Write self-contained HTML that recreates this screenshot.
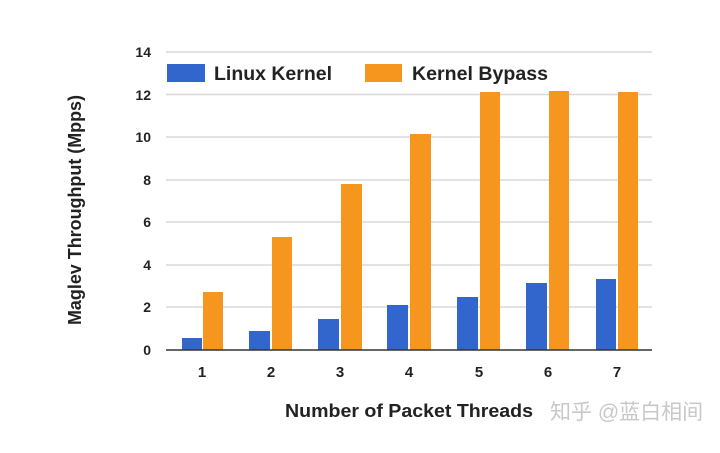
<!DOCTYPE html>
<html><head><meta charset="utf-8"><style>
body{margin:0;background:#fff;width:720px;height:448px;overflow:hidden;font-family:"Liberation Sans",Arial,sans-serif}
</style></head><body>
<svg width="720" height="448" xmlns="http://www.w3.org/2000/svg" font-family="Liberation Sans, Arial, sans-serif">
<g stroke="#d8d8d8" stroke-width="1.5">
<line x1="166" x2="652" y1="52" y2="52"/><line x1="166" x2="652" y1="94.5" y2="94.5"/>
<line x1="166" x2="652" y1="137" y2="137"/><line x1="166" x2="652" y1="180" y2="180"/>
<line x1="166" x2="652" y1="222" y2="222"/><line x1="166" x2="652" y1="265" y2="265"/>
<line x1="166" x2="652" y1="307" y2="307"/>
</g>
<g fill="#3366cc">
<rect x="182" y="338" width="20" height="12"/><rect x="249" y="331" width="21" height="19"/>
<rect x="318" y="319" width="21" height="31"/><rect x="387" y="305" width="21" height="45"/>
<rect x="457" y="297" width="21" height="53"/><rect x="526" y="283" width="21" height="67"/>
<rect x="596" y="279" width="20" height="71"/>
</g>
<g fill="#f7961f">
<rect x="203" y="292" width="20" height="58"/><rect x="272" y="237" width="20" height="113"/>
<rect x="341" y="184" width="21" height="166"/><rect x="410" y="134" width="21" height="216"/>
<rect x="480" y="92" width="20" height="258"/><rect x="549" y="91" width="20" height="259"/>
<rect x="618" y="92" width="20" height="258"/>
</g>
<line x1="166" x2="652" y1="350" y2="350" stroke="#333" stroke-width="1.5"/>
<rect x="167" y="64" width="38" height="18" fill="#3366cc"/>
<rect x="365" y="64" width="37" height="18" fill="#f7961f"/>
<g fill="#222" font-weight="bold">
<text x="214" y="80" font-size="19" textLength="118" lengthAdjust="spacingAndGlyphs">Linux Kernel</text>
<text x="412" y="80" font-size="19" textLength="136" lengthAdjust="spacingAndGlyphs">Kernel Bypass</text>
<g font-size="14" text-anchor="end">
<text x="151" y="57">14</text><text x="151" y="100">12</text><text x="151" y="142">10</text>
<text x="151" y="185">8</text><text x="151" y="227">6</text><text x="151" y="270">4</text>
<text x="151" y="312">2</text><text x="151" y="355">0</text>
</g>
<g font-size="15" text-anchor="middle">
<text x="202" y="377">1</text><text x="271" y="377">2</text><text x="340" y="377">3</text>
<text x="409" y="377">4</text><text x="479" y="377">5</text><text x="548" y="377">6</text>
<text x="617" y="377">7</text>
</g>
<text x="409" y="417" font-size="18.5" text-anchor="middle" textLength="248" lengthAdjust="spacingAndGlyphs">Number of Packet Threads</text>
<text transform="translate(81,210) rotate(-90)" font-size="18" text-anchor="middle" textLength="230" lengthAdjust="spacingAndGlyphs">Maglev Throughput (Mpps)</text>
</g>
<text x="550" y="419" font-size="21" fill="#c8c8c8" font-family="Liberation Sans, Noto Sans CJK SC, sans-serif">知乎 @蓝白相间</text>
</svg>
</body></html>
